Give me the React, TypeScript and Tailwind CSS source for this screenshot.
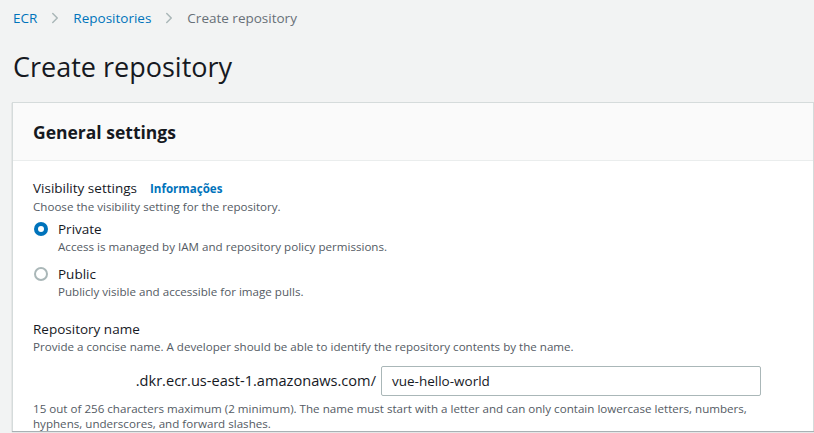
import { ChevronRight } from 'lucide-react'

function Radio({ checked }: { checked: boolean }) {
  return checked ? (
    <span className="mt-[3px] w-[14px] h-[14px] rounded-full bg-[#0073bb] flex items-center justify-center flex-shrink-0">
      <span className="w-[6px] h-[6px] rounded-full bg-white" />
    </span>
  ) : (
    <span className="mt-[3px] w-[14px] h-[14px] rounded-full border-2 border-[#aab7b8] bg-white flex-shrink-0" />
  )
}

const OPTIONS = [
  { label: 'Private', desc: 'Access is managed by IAM and repository policy permissions.', checked: true },
  { label: 'Public', desc: 'Publicly visible and accessible for image pulls.', checked: false },
]

export default function App() {
  return (
    <div className="min-h-screen bg-[#f2f3f3] text-[#16191f] font-['Open_Sans',sans-serif] overflow-hidden h-[433px]">
      {/* Breadcrumbs */}
      <nav className="flex items-center gap-[9px] pl-[13px] pt-[8px] text-[13.5px] leading-[20px]">
        <span className="text-[#0073bb]">ECR</span>
        <ChevronRight className="w-[18px] h-[18px] text-[#aab7b8]" strokeWidth={2} />
        <span className="text-[#0073bb]">Repositories</span>
        <ChevronRight className="w-[18px] h-[18px] text-[#aab7b8]" strokeWidth={2} />
        <span className="text-[#687078]">Create repository</span>
      </nav>

      <h1 className="pl-[13px] pt-[21px] text-[27px] leading-[36px] font-normal">Create repository</h1>

      {/* Card */}
      <section className="ml-[12px] mt-[17px] bg-white border-l border-t border-r border-[#d5dbdb] shadow-[0_1px_1px_rgba(0,28,36,0.3)]">
        <header className="h-[58px] bg-[#fafafa] border-b border-[#eaeded] px-[20px] flex items-center">
          <h2 className="text-[17.5px] font-bold leading-[24px] pt-[1px]">General settings</h2>
        </header>

        <div className="px-[20px] pt-[16px]">
          <div className="flex items-baseline gap-[13px]">
            <span className="text-[13.5px] leading-[22px]">Visibility settings</span>
            <span className="text-[11.6px] font-bold text-[#0073bb]">Informações</span>
          </div>
          <p className="text-[11.6px] leading-[15px] text-[#545b64]">Choose the visibility setting for the repository.</p>

          <div className="mt-[5px] flex flex-col gap-[9px]">
            {OPTIONS.map((o) => (
              <div key={o.label} className="flex gap-[10px] pl-[1px]">
                <Radio checked={o.checked} />
                <div>
                  <div className="text-[13.5px] leading-[20px]">{o.label}</div>
                  <div className="text-[11.6px] leading-[16px] text-[#545b64]">{o.desc}</div>
                </div>
              </div>
            ))}
          </div>

          <div className="mt-[19px]">
            <div className="text-[13.5px] leading-[20px]">Repository name</div>
            <p className="text-[11.6px] leading-[16px] text-[#545b64]">
              Provide a concise name. A developer should be able to identify the repository contents by the name.
            </p>
            <div className="mt-[11px] flex items-center">
              <span className="w-[348px] text-right text-[14.6px] pr-[5px]">.dkr.ecr.us-east-1.amazonaws.com/</span>
              <div className="w-[380px] h-[30px] border border-[#aab7b8] rounded-[2px] flex items-center px-[10px] text-[13.5px]">
                vue-hello-world
              </div>
            </div>
            <p className="mt-[5px] text-[11.6px] leading-[15px] text-[#545b64]">
              15 out of 256 characters maximum (2 minimum). The name must start with a letter and can only contain lowercase letters, numbers,
              hyphens, underscores, and forward slashes.
            </p>
          </div>
        </div>
      </section>
    </div>
  )
}
